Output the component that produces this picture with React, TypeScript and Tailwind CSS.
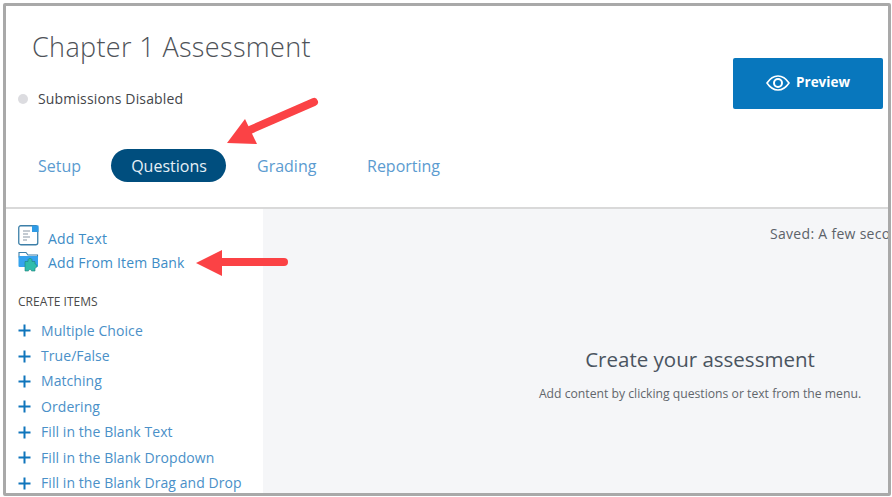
import React from "react";

function Plus() {
  return (
    <svg width="13" height="13" viewBox="0 0 13 13" className="shrink-0">
      <path d="M6.5 0.5V12.5M0.5 6.5H12.5" stroke="#0f75bc" strokeWidth="2" fill="none" />
    </svg>
  );
}

const items = [
  "Multiple Choice",
  "True/False",
  "Matching",
  "Ordering",
  "Fill in the Blank Text",
  "Fill in the Blank Dropdown",
  "Fill in the Blank Drag and Drop",
];

export default function App() {
  return (
    <div className="w-[892px] h-[497px] bg-white pl-[3px] pt-[3px] pr-[1px] pb-[1px] font-['Open_Sans',sans-serif] overflow-hidden">
      <div className="relative w-full h-full border-[3px] border-[#a9a9a9] rounded-[2px] overflow-hidden flex flex-col bg-white">
        <div className="h-[203px] shrink-0 border-b-2 border-[#d9d9d9] flex justify-between">
          <div className="flex flex-col">
            <h1 className="ml-[26px] mt-[23px] h-[36px] text-[27px] leading-[36px] font-light text-[#4e5258] whitespace-nowrap tracking-[0.35px]">
              Chapter 1 Assessment
            </h1>
            <div className="flex items-center ml-[12px] mt-[24px] h-[20px]">
              <span className="w-[10px] h-[10px] rounded-full bg-[#dcdce0]" />
              <span className="ml-[10px] text-[14px] leading-[20px] text-[#43454a] tracking-[0.15px] whitespace-nowrap">
                Submissions Disabled
              </span>
            </div>
            <div className="flex items-center mt-[40px] ml-[32px] text-[16px] leading-[22px] text-[#5b9bd0] h-[33px]">
              <span className="w-[73px]">Setup</span>
              <span className="w-[115px] h-[33px] pl-[1px] rounded-full bg-[#004e7e] text-[#e6f0f6] flex items-center justify-center">
                Questions
              </span>
              <span className="ml-[31px] w-[110px]">Grading</span>
              <span>Reporting</span>
            </div>
          </div>
          <div className="pt-[52px] pr-[5px]">
            <div className="w-[150px] h-[51px] pb-[2px] rounded-[2px] bg-[#0877bd] flex items-center justify-center gap-[6px] text-white text-[13.5px] font-bold">
              <svg width="24" height="16" viewBox="0 0 24 16" fill="none" stroke="#ffffff" strokeWidth="1.6">
                <path d="M1 8C4 3.5 7.8 1 12 1s8 2.5 11 7c-3 4.500-6.800 7-11 7S4 12.500 1 8Z" />
                <circle cx="12" cy="8" r="4" strokeWidth="2" />
              </svg>
              <span>Preview</span>
            </div>
          </div>
        </div>
        <div className="flex-1 flex min-h-0">
          <div className="w-[257px] shrink-0 bg-white pl-[12px] pt-[18px] overflow-hidden">
            <div className="flex items-center h-[24px]">
              <svg width="21" height="21" viewBox="0 0 21 21" className="shrink-0 -mt-[8px]">
                <rect x="0.75" y="0.75" width="19" height="19" rx="2" fill="#ffffff" stroke="#3c7fa8" strokeWidth="1.3" />
                <path d="M14 0.500H20.500V7H14Z" fill="#2e9be6" />
                <path d="M5 6H12M5 9H10M5 12H12M5 15H9" stroke="#8a98a5" strokeWidth="1.2" />
              </svg>
              <span className="ml-[9px] text-[14px] leading-[20px] text-[#3d8cc6] tracking-[0.2px]">Add Text</span>
            </div>
            <div className="flex items-center h-[24px]">
              <svg width="21" height="21" viewBox="0 0 21 21" className="shrink-0 -mt-[4px]">
                <path d="M1 3V1.500H8L10 4H19.500V6H1Z" fill="#ffffff" stroke="#3c7fa8" strokeWidth="1.100" />
                <rect x="0.500" y="5" width="19.500" height="11" rx="1" fill="#35a3ee" />
                <path d="M7 10.500H10V9C10 7 14 7 14 9V10.500H17V13C19.500 13 19.500 17 17 17V20H13.500C13.500 18 10.500 18 10.500 20H7Z" fill="#2fbcab" stroke="#1d7f78" strokeWidth="0.600" />
              </svg>
              <span className="ml-[9px] text-[14px] leading-[20px] text-[#3d8cc6] tracking-[0.16px] whitespace-nowrap">
                Add From Item Bank
              </span>
            </div>
            <div className="mt-[19px] text-[12px] leading-[16px] text-[#4a4a4a]">CREATE ITEMS</div>
            <div className="mt-[8px]">
              {items.map((t) => (
                <div key={t} className="flex items-center h-[25.400px]">
                  <Plus />
                  <span className="ml-[10px] text-[14px] leading-[20px] text-[#4a90c8] tracking-[0.07px] whitespace-nowrap">{t}</span>
                </div>
              ))}
            </div>
          </div>
          <div className="flex-1 min-w-0 bg-[#f5f6f8] overflow-hidden">
            <div className="w-[874px] flex flex-col items-center">
              <div className="self-start ml-[507px] mt-[16px] h-[20px] text-[14px] leading-[18px] tracking-[0.3px] text-[#5c6269] whitespace-nowrap">
                Saved: A few seconds ago
              </div>
              <div className="mt-[100px] text-[20.500px] leading-[28px] text-[#4a5460] whitespace-nowrap">
                Create your assessment
              </div>
              <div className="mt-[12px] text-[12.200px] leading-[18px] text-[#62666c] whitespace-nowrap">
                Add content by clicking questions or text from the menu.
              </div>
            </div>
          </div>
        </div>
        <svg className="absolute left-[-6px] top-[-6px] pointer-events-none" width="892" height="497" viewBox="0 0 892 497">
          <path d="M314 102L243 133" stroke="#fb4245" strokeWidth="8" strokeLinecap="round" fill="none" />
          <path d="M245 119L227 143L257 144Z" fill="#fb4245" />
          <path d="M284 262H220" stroke="#fb4245" strokeWidth="8" strokeLinecap="round" fill="none" />
          <path d="M222 250L196 263L222 276Z" fill="#fb4245" />
        </svg>
      </div>
    </div>
  );
}
